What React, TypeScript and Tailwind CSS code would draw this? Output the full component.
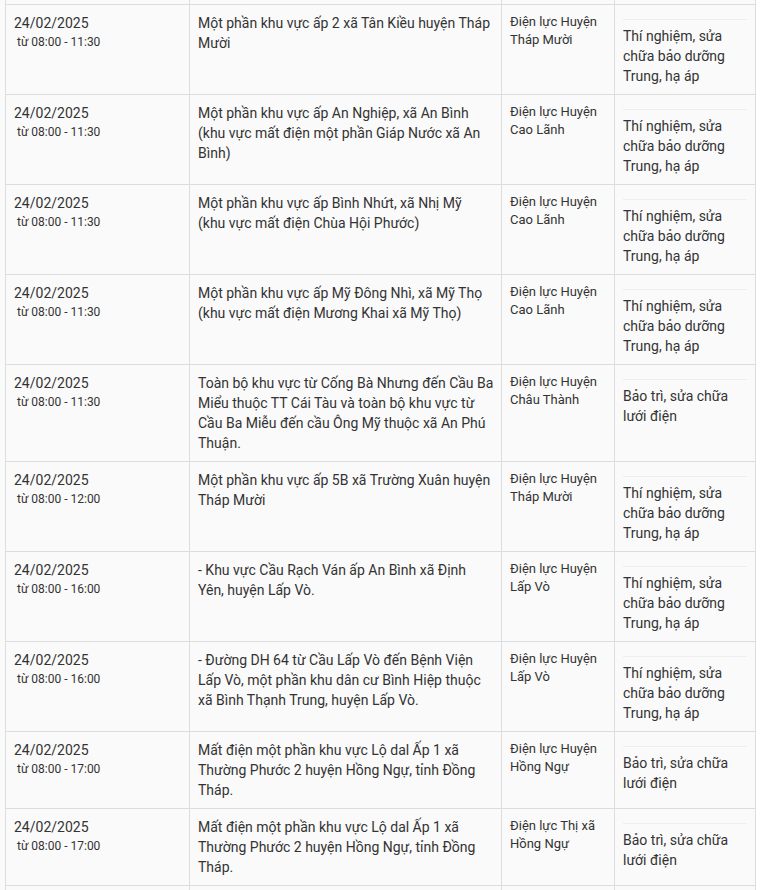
import React from 'react';

interface Outage {
  date: string;
  time: string;
  area: string[];
  unit: string;
  reason: string;
}

const TEST = 'Thí nghiệm, sửa chữa bảo dưỡng Trung, hạ áp';
const REPAIR = 'Bảo trì, sửa chữa lưới điện';

// area lines are kept as they wrap on the original page
const outages: Outage[] = [
  { date: '24/02/2025', time: '08:00 - 11:30', area: ['Một phần khu vực ấp 2 xã Tân Kiều huyện Tháp', 'Mười'], unit: 'Điện lực Huyện Tháp Mười', reason: TEST },
  { date: '24/02/2025', time: '08:00 - 11:30', area: ['Một phần khu vực ấp An Nghiệp, xã An Bình', '(khu vực mất điện một phần Giáp Nước xã An', 'Bình)'], unit: 'Điện lực Huyện Cao Lãnh', reason: TEST },
  { date: '24/02/2025', time: '08:00 - 11:30', area: ['Một phần khu vực ấp Bình Nhứt, xã Nhị Mỹ', '(khu vực mất điện Chùa Hội Phước)'], unit: 'Điện lực Huyện Cao Lãnh', reason: TEST },
  { date: '24/02/2025', time: '08:00 - 11:30', area: ['Một phần khu vực ấp Mỹ Đông Nhì, xã Mỹ Thọ', '(khu vực mất điện Mương Khai xã Mỹ Thọ)'], unit: 'Điện lực Huyện Cao Lãnh', reason: TEST },
  { date: '24/02/2025', time: '08:00 - 11:30', area: ['Toàn bộ khu vực từ Cống Bà Nhưng đến Cầu Ba', 'Miểu thuộc TT Cái Tàu và toàn bộ khu vực từ', 'Cầu Ba Miễu đến cầu Ông Mỹ thuộc xã An Phú', 'Thuận.'], unit: 'Điện lực Huyện Châu Thành', reason: REPAIR },
  { date: '24/02/2025', time: '08:00 - 12:00', area: ['Một phần khu vực ấp 5B xã Trường Xuân huyện', 'Tháp Mười'], unit: 'Điện lực Huyện Tháp Mười', reason: TEST },
  { date: '24/02/2025', time: '08:00 - 16:00', area: ['- Khu vực Cầu Rạch Ván ấp An Bình xã Định', 'Yên, huyện Lấp Vò.'], unit: 'Điện lực Huyện Lấp Vò', reason: TEST },
  { date: '24/02/2025', time: '08:00 - 16:00', area: ['- Đường DH 64 từ Cầu Lấp Vò đến Bệnh Viện', 'Lấp Vò, một phần khu dân cư Bình Hiệp thuộc', 'xã Bình Thạnh Trung, huyện Lấp Vò.'], unit: 'Điện lực Huyện Lấp Vò', reason: TEST },
  { date: '24/02/2025', time: '08:00 - 17:00', area: ['Mất điện một phần khu vực Lộ dal Ấp 1 xã', 'Thường Phước 2 huyện Hồng Ngự, tỉnh Đồng', 'Tháp.'], unit: 'Điện lực Huyện Hồng Ngự', reason: REPAIR },
  { date: '24/02/2025', time: '08:00 - 17:00', area: ['Mất điện một phần khu vực Lộ dal Ấp 1 xã', 'Thường Phước 2 huyện Hồng Ngự, tỉnh Đồng', 'Tháp.'], unit: 'Điện lực Thị xã Hồng Ngự', reason: REPAIR },
];

const cell = 'border border-[#dddddd] p-2 align-top';
const edge = 'border border-[#dddddd] p-0';

export default function App() {
  return (
    <div className="h-[890px] overflow-hidden bg-white font-['Roboto',sans-serif] text-[#333333]">
      <div className="w-[755px] bg-[#fafafa] pl-[5px]">
        <table className="w-[750px] table-fixed border-collapse">
          <colgroup>
            <col className="w-[184px]" />
            <col className="w-[312px]" />
            <col className="w-[113px]" />
            <col className="w-[141px]" />
          </colgroup>
          <tbody>
            <tr className="h-[4px]">
              <td className={`${edge} border-t-0`} />
              <td className={`${edge} border-t-0`} />
              <td className={`${edge} border-t-0`} />
              <td className={`${edge} border-t-0`} />
            </tr>
            {outages.map((o, i) => (
              <tr key={i}>
                <td className={cell}>
                  <div className="text-[14px] leading-5">{o.date}</div>
                  <div className="pl-[3px] text-[12px] leading-[18px]">từ {o.time}</div>
                </td>
                <td className={`${cell} text-[14px] leading-5`}>
                  {o.area.map((line, j) => (
                    <div key={j} className="whitespace-nowrap">{line}</div>
                  ))}
                </td>
                <td className={`${cell} text-[13px] leading-[18px]`}>{o.unit}</td>
                <td className={`${cell} text-[14px] leading-5`}>
                  <div className="mt-[6px] border-t border-[#eeeeee] pt-[6px]">{o.reason}</div>
                </td>
              </tr>
            ))}
            <tr className="h-[20px]">
              <td className={edge} />
              <td className={edge} />
              <td className={edge} />
              <td className={edge} />
            </tr>
          </tbody>
        </table>
      </div>
    </div>
  );
}
